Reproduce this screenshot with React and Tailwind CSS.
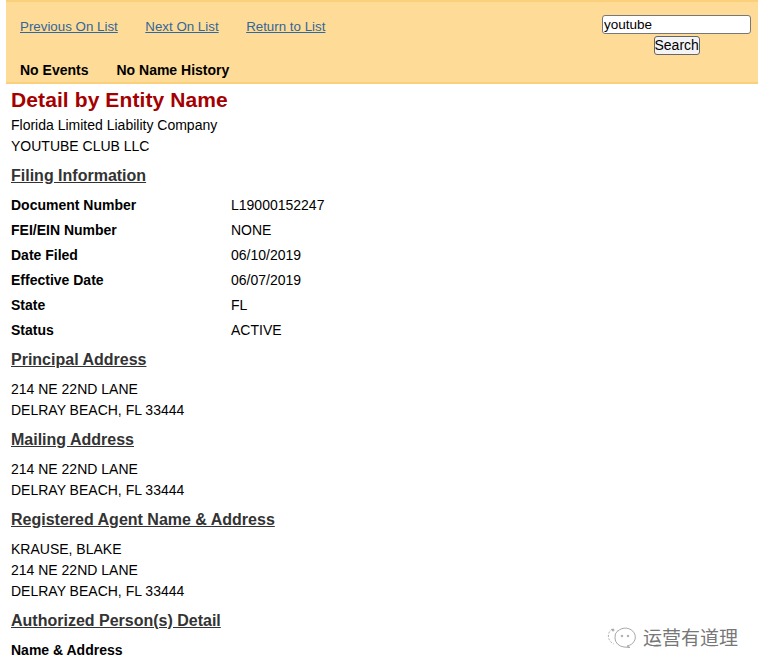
import React from "react";

const font = { fontFamily: '"Liberation Sans", Arial, sans-serif' };

function Head({ children, className = "" }) {
  return <div className={`text-[16px] leading-[20px] font-bold underline text-[#333] ${className}`}>{children}</div>;
}

function Row({ k, v }) {
  return (
    <div className="flex h-[25px] items-center text-[14px]">
      <div className="w-[220px] font-bold text-black">{k}</div>
      <div className="text-black">{v}</div>
    </div>
  );
}

function Lines({ items }) {
  return (
    <div className="text-[14px] leading-[21px] text-black">
      {items.map((t) => (
        <div key={t}>{t}</div>
      ))}
    </div>
  );
}

export default function App() {
  return (
    <div className="relative w-[762px] h-[670px] overflow-hidden bg-white" style={font}>
      <div className="ml-[6px] w-[752px] h-[84px] bg-[#fedc98] border-t-2 border-b-2 border-[#fbd07a] flex justify-between">
        <div className="pl-[14px] flex flex-col">
          <div className="flex gap-[27.5px] pt-[16px] text-[13.33px] leading-[18px] text-[#336699] underline">
            <span>Previous On List</span>
            <span>Next On List</span>
            <span>Return to List</span>
          </div>
          <div className="flex gap-[28px] pt-[25px] text-[14px] leading-[18px] font-bold text-black">
            <span>No Events</span>
            <span>No Name History</span>
          </div>
        </div>
        <div className="mr-[7px] pt-[13px] flex flex-col items-center w-[149px]">
          <input
            readOnly
            value="youtube"
            className="w-[149px] h-[19px] bg-white border border-[#777] rounded-[3px] px-[1px] pt-[1px] text-[13.5px] text-black outline-none"
          />
          <button className="mt-[2px] h-[19px] w-[46px] bg-[#f4f4f6] border border-[#666] rounded-[3px] text-[14px] leading-[15px] text-black">
            Search
          </button>
        </div>
      </div>
      <div className="pl-[11px]">
        <div className="text-[21px] tracking-[0.1px] leading-[24px] font-bold text-[#a50000] pt-[4px]">Detail by Entity Name</div>
        <div className="pt-[3px]">
          <Lines items={["Florida Limited Liability Company", "YOUTUBE CLUB LLC"]} />
        </div>
        <Head className="mt-[9px] mb-[7px]">Filing Information</Head>
        <Row k="Document Number" v="L19000152247" />
        <Row k="FEI/EIN Number" v="NONE" />
        <Row k="Date Filed" v="06/10/2019" />
        <Row k="Effective Date" v="06/07/2019" />
        <Row k="State" v="FL" />
        <Row k="Status" v="ACTIVE" />
        <Head className="mt-[7px] mb-[9px]">Principal Address</Head>
        <Lines items={["214 NE 22ND LANE", "DELRAY BEACH, FL 33444"]} />
        <Head className="mt-[9px] mb-[9px]">Mailing Address</Head>
        <Lines items={["214 NE 22ND LANE", "DELRAY BEACH, FL 33444"]} />
        <Head className="mt-[9px] mb-[9px]">Registered Agent Name &amp; Address</Head>
        <Lines items={["KRAUSE, BLAKE", "214 NE 22ND LANE", "DELRAY BEACH, FL 33444"]} />
        <Head className="mt-[9px] mb-[9px]">Authorized Person(s) Detail</Head>
        <div className="text-[14px] leading-[21px] font-bold text-black">Name &amp; Address</div>
      </div>
      <div className="absolute left-[606px] top-[623px] flex items-center gap-[7px]">
        <svg width="30" height="28" viewBox="0 0 30 28" fill="none" stroke="#a8a8a8" strokeWidth="1">
          <path d="M6 6a10 9 0 0 0 2 15" strokeDasharray="2 1.500" />
          <path d="M12 8a10 9 0 1 1 9 15l3 1.500-6-.5a10 9 0 0 1-9-9 8 8 0 0 1 3-7.500z" />
          <circle cx="7" cy="7" r="1" fill="#a8a8a8" />
          <circle cx="16" cy="13" r="0.8" fill="#a8a8a8" />
          <circle cx="22" cy="13" r="0.8" fill="#a8a8a8" />
        </svg>
        <span
          className="text-[19px] leading-[24px] text-[#777]"
          style={{ fontFamily: '"Noto Sans CJK SC", sans-serif' }}
        >
          运营有道理
        </span>
      </div>
    </div>
  );
}
